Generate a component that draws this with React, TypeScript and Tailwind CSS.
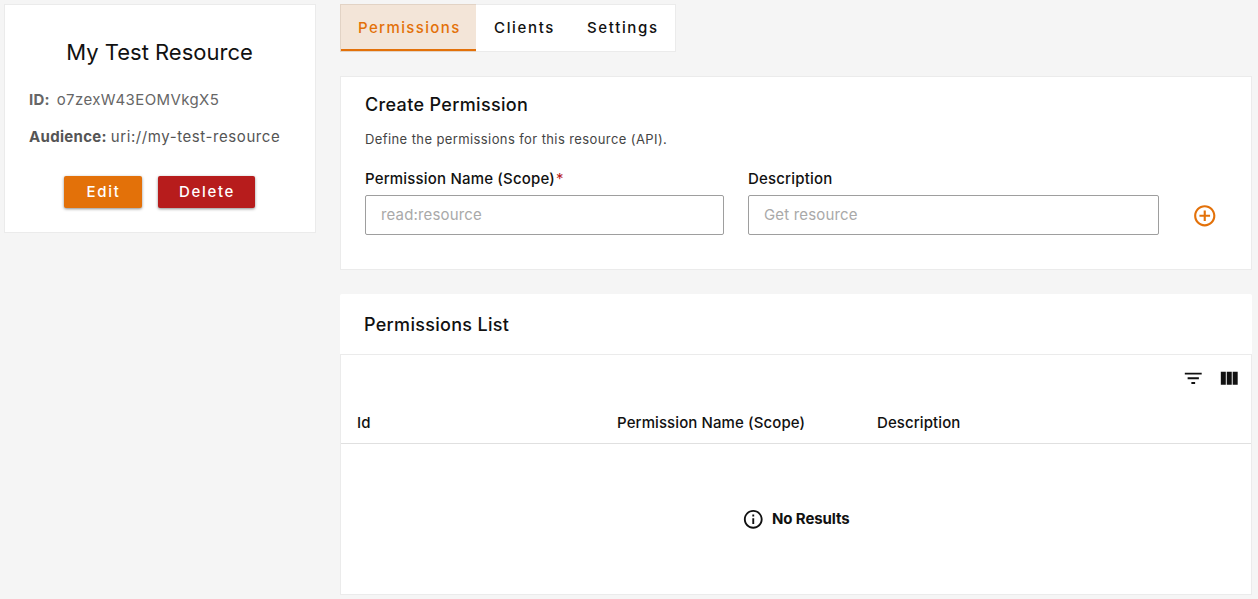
import type { ReactNode } from "react";

function Icon({ d, className }: { d: string; className: string }) {
  return (
    <svg viewBox="0 0 24 24" fill="currentColor" className={className} aria-hidden="true">
      <path d={d} />
    </svg>
  );
}

const ADD =
  "M13 7h-2v4H7v2h4v4h2v-4h4v-2h-4V7zm-1-5C6.48 2 2 6.48 2 12s4.48 10 10 10 10-4.48 10-10S17.52 2 12 2zm0 18c-4.41 0-8-3.59-8-8s3.59-8 8-8 8 3.59 8 8-3.59 8-8 8z";
const FILTER = "M10 18h4v-2h-4v2zM3 6v2h18V6H3zm3 7h12v-2H6v2z";
const COLUMNS = "M14.67 5v14H9.33V5h5.34zm1 14H21V5h-5.33v14zm-7.34 0V5H3v14h5.33z";
const INFO =
  "M11 7h2v2h-2zm0 4h2v6h-2zm1-9C6.48 2 2 6.48 2 12s4.48 10 10 10 10-4.48 10-10S17.52 2 12 2zm0 18c-4.41 0-8-3.59-8-8s3.59-8 8-8 8 3.59 8 8-3.59 8-8 8z";

function Field({ label, placeholder, required, className }: { label: ReactNode; placeholder: string; required?: boolean; className: string }) {
  return (
    <label className={`flex flex-col ${className}`}>
      <span className="h-[22px] text-[15px] leading-[22px] font-medium tracking-[0.18px]">
        {label}
        {required && <span className="ml-px font-normal text-[#b71c1c]">*</span>}
      </span>
      <input
        placeholder={placeholder}
        className="mt-[5px] h-10 w-full rounded-[2px] border border-[#9e9e9e] px-[15px] pb-0.5 text-[15px] tracking-[0.16px] outline-none placeholder:text-[#a9a9a9]"
      />
    </label>
  );
}

export default function App() {
  return (
    <div className="flex h-[599px] items-start overflow-hidden bg-[#f5f5f5] pt-1 pl-1 font-['Inter',sans-serif] text-[#111]">
      <aside className="flex h-[229px] w-[312px] shrink-0 flex-col border border-[#ebebeb] bg-white px-6 pt-[31px]">
        <h1 className="pr-px text-center text-[22px] leading-8">My Test Resource</h1>
        <p className="mt-[21px] text-[15px] leading-[22px] tracking-[0.4px] text-[#666]">
          <b className="mr-[7px] font-bold tracking-[0.2px]">ID:</b>
          o7zexW43EOMVkgX5
        </p>
        <p className="mt-[15px] text-[15px] leading-[22px] whitespace-nowrap text-[#555]">
          <b className="mr-1 font-bold tracking-[0.3px]">Audience:</b>
          <span className="tracking-[0.58px]">uri://my-test-resource</span>
        </p>
        <div className="mt-[28px] flex gap-4 pl-[35px] text-[15px] font-medium tracking-[1.7px] text-white">
          <button className="h-8 w-[78px] rounded-[2px] bg-[#e37109] pl-px shadow-[0_1px_3px_rgba(0,0,0,0.45)]">Edit</button>
          <button className="h-8 w-[97px] rounded-[2px] bg-[#b71c1c] pl-px shadow-[0_1px_3px_rgba(0,0,0,0.45)]">Delete</button>
        </div>
      </aside>

      <main className="ml-6 flex w-[912px] shrink-0 flex-col">
        <nav className="flex h-12 w-[336px] border border-[#ebebeb] bg-white text-[15px] font-medium tracking-[1.65px]">
          <button className="-mt-px -ml-px h-12 w-[136px] border border-r-0 border-[#e2d3c5] bg-[#f3e5d8] pl-[17px] text-left text-[#e37109] shadow-[inset_0_-2px_0_#e37109]">
            <span className="tracking-[1.37px]">Permissions</span>
          </button>
          <button className="h-[46px] pl-[18px] text-left">Clients</button>
          <button className="h-[46px] pl-8 text-left">Settings</button>
        </nav>

        <section className="mt-6 h-[194px] border border-[#ebebeb] bg-white px-6 pt-4">
          <h2 className="text-[18px] leading-6 font-medium tracking-[0.34px]">Create Permission</h2>
          <p className="mt-3 text-[13px] leading-5 tracking-[0.4px] text-[#444]">Define the permissions for this resource (API).</p>
          <div className="mt-[19px] flex">
            <Field label="Permission Name (Scope)" required placeholder="read:resource" className="w-[359px]" />
            <Field label="Description" placeholder="Get resource" className="ml-6 w-[411px]" />
            <button aria-label="Add" className="mt-[34.5px] ml-[32.5px] h-[25.5px] text-[#e37109]">
              <Icon d={ADD} className="size-[25.5px]" />
            </button>
          </div>
        </section>

        <section className="mt-6">
          <h2 className="h-[60px] rounded-t-[2px] bg-white pl-6 text-[18px] leading-[61px] font-medium tracking-[0.3px]">Permissions List</h2>
          <div className="h-[241px] border border-[#ebebeb] bg-white">
            <div className="flex h-[47px] items-center justify-end gap-[14px] pr-[10.5px]">
              <Icon d={FILTER} className="size-[22.5px]" />
              <Icon d={COLUMNS} className="size-[22.5px]" />
            </div>
            <div className="flex h-[42px] items-center border-b border-[#e0e0e0] pt-px pl-4 text-[15px] font-medium tracking-[0.1px]">
              <span className="w-[260px]">Id</span>
              <span className="w-[260px]">Permission Name (Scope)</span>
              <span>Description</span>
            </div>
            <div className="flex h-[151px] items-center justify-center gap-2 pr-px">
              <Icon d={INFO} className="size-[22.5px]" />
              <b className="text-[15px] font-bold tracking-[-0.12px]">No Results</b>
            </div>
          </div>
        </section>
      </main>
    </div>
  );
}
